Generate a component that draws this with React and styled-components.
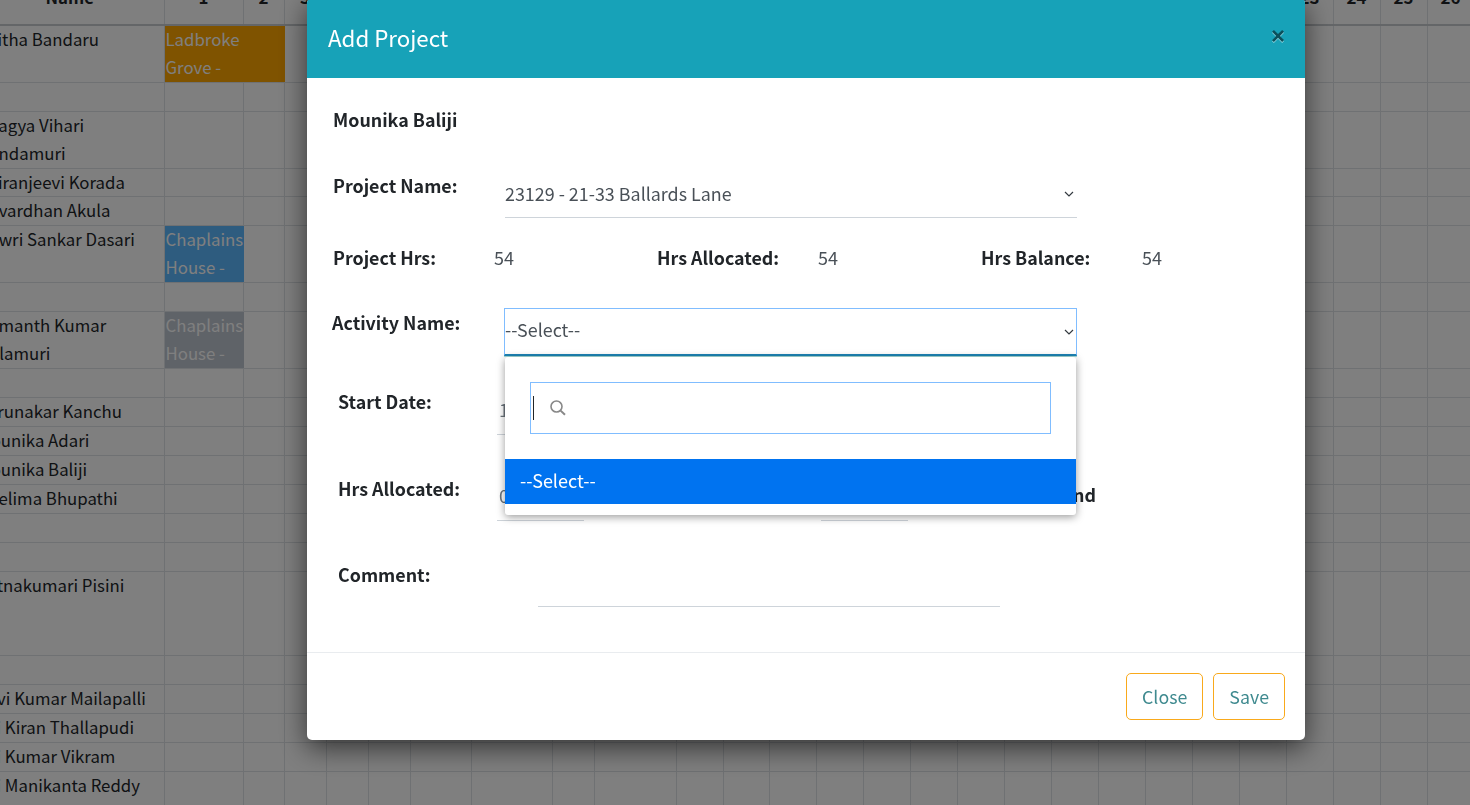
import React from "react";
import styled, { createGlobalStyle } from "styled-components";

const columns = [
    193, 79, 41, 42, 42, 42, 61, 81, 42, 82, 47, 46, 47, 47, 47, 47, 47, 47, 47,
    47, 47, 47, 47, 47, 47, 47, 47,
];
const days = columns.slice(1).map((_, i) => i + 1);

const rows = [
    { name: "Anitha Bandaru", h: 57, chip: { color: "#ffa600", span: 2, lines: ["Ladbroke", "Grove -"] } },
    { name: "", h: 29 },
    { name: "Bhagya Vihari Nandamuri", h: 57 },
    { name: "Chiranjeevi Korada", h: 28 },
    { name: "Govardhan Akula", h: 29 },
    { name: "Gowri Sankar Dasari", h: 57, chip: { color: "#5cb8ff", span: 1, lines: ["Chaplains", "House -"] } },
    { name: "", h: 29 },
    { name: "Hemanth Kumar Yellamuri", h: 57, chip: { color: "#bec6d0", span: 1, lines: ["Chaplains", "House -"] } },
    { name: "", h: 29 },
    { name: "Karunakar Kanchu", h: 29 },
    { name: "Mounika Adari", h: 29 },
    { name: "Mounika Baliji", h: 29 },
    { name: "Neelima Bhupathi", h: 29 },
    { name: "", h: 29 },
    { name: "", h: 29 },
    { name: "Ratnakumari Pisini", h: 84 },
    { name: "", h: 29 },
    { name: "Ravi Kumar Mailapalli", h: 29 },
    { name: "Sai Kiran Thallapudi", h: 29 },
    { name: "Sai Kumar Vikram", h: 29 },
    { name: "Sai Manikanta Reddy", h: 40 },
];

export default function App() {
    return (
        <>
            <GlobalStyle />
            <Page>
                <Roster>
                    <colgroup>
                        {columns.map((w, i) => (
                            <Col key={i} $w={w} />
                        ))}
                    </colgroup>
                    <thead>
                        <tr>
                            <HeadCell $pad={5}>Name</HeadCell>
                            {days.map((d) => (
                                <HeadCell key={d}>{d}</HeadCell>
                            ))}
                        </tr>
                    </thead>
                    <tbody>
                        {rows.map((row, i) => (
                            <Row key={i} $h={row.h}>
                                <NameCell>
                                    <CellText>{row.name}</CellText>
                                </NameCell>
                                {row.chip && (
                                    <ChipCell colSpan={row.chip.span} $color={row.chip.color}>
                                        <CellText>
                                            {row.chip.lines[0]}
                                            <br />
                                            {row.chip.lines[1]}
                                        </CellText>
                                    </ChipCell>
                                )}
                                {days.slice(row.chip ? row.chip.span : 0).map((d) => (
                                    <Cell key={d} />
                                ))}
                            </Row>
                        ))}
                    </tbody>
                </Roster>
            </Page>

            <Backdrop>
                <Modal>
                    <ModalHeader>
                        <ModalTitle>Add Project</ModalTitle>
                        <CloseX>×</CloseX>
                    </ModalHeader>

                    <ModalBody>
                        <Owner>Mounika Baliji</Owner>

                        <SelectRow $top={37}>
                            <SelectLabel>Project Name:</SelectLabel>
                            <PlainSelect>
                                <SelectText $lift={2}>23129 - 21-33 Ballards Lane</SelectText>
                                <Chevron />
                            </PlainSelect>
                        </SelectRow>

                        <HoursRow>
                            <HoursItem>
                                <Label>Project Hrs:</Label>
                                <Value>54</Value>
                            </HoursItem>
                            <HoursItem>
                                <Label>Hrs Allocated:</Label>
                                <Value>54</Value>
                            </HoursItem>
                            <HoursItem>
                                <Label>Hrs Balance:</Label>
                                <Value>54</Value>
                            </HoursItem>
                        </HoursRow>

                        <SelectRow $top={37}>
                            <ActivityLabel>Activity Name:</ActivityLabel>
                            <OpenSelectWrap>
                                <OpenSelect>
                                    <SelectText $lift={6}>--Select--</SelectText>
                                    <Chevron />
                                </OpenSelect>
                                <Dropdown>
                                    <SearchBox>
                                        <Caret />
                                        <SearchIcon />
                                    </SearchBox>
                                    <Option>
                                        <OptionText>--Select--</OptionText>
                                    </Option>
                                </Dropdown>
                            </OpenSelectWrap>
                        </SelectRow>

                        <InputRow $top={33}>
                            <InputLabel $up={2}>Start Date:</InputLabel>
                            <SmallInput>10/08/2023</SmallInput>
                            <InputLabel $left={78} $up={2}>End Date:</InputLabel>
                            <SmallInput>10/08/2023</SmallInput>
                        </InputRow>

                        <InputRow $top={40}>
                            <InputLabel>Hrs Allocated:</InputLabel>
                            <SmallInput>0</SmallInput>
                            <InputLabel $left={78}>Hrs Balance:</InputLabel>
                            <SmallInput>0</SmallInput>
                            <WeekendLabel>Incl Weekend</WeekendLabel>
                        </InputRow>

                        <InputRow $top={40}>
                            <CommentLabel>Comment:</CommentLabel>
                            <CommentInput />
                        </InputRow>
                    </ModalBody>

                    <ModalFooter>
                        <FooterButton>Close</FooterButton>
                        <FooterButton>Save</FooterButton>
                    </ModalFooter>
                </Modal>
            </Backdrop>
        </>
    );
}

function Chevron() {
    return (
        <ChevronSvg viewBox="0 0 10 6" fill="none">
            <path d="M1 1l4 4 4-4" stroke="#343a40" strokeWidth="1.2" />
        </ChevronSvg>
    );
}

function SearchIcon() {
    return (
        <SearchSvg viewBox="0 0 18 18" fill="none">
            <circle cx="7.5" cy="7.5" r="5.5" stroke="#888" strokeWidth="1.6" />
            <path d="M11.6 11.6l4.4 4.2" stroke="#888" strokeWidth="2" />
        </SearchSvg>
    );
}

const GlobalStyle = createGlobalStyle`
    html, body {
        margin: 0;
        height: 100%;
        overflow: hidden;
        background: #fff;
    }
    body {
        font-family: "Noto Sans CJK SC", "Noto Sans", sans-serif;
        font-size: 18px;
        line-height: 28px;
        color: #212529;
    }
`;

const Page = styled.div`
    height: 100vh;
    overflow: hidden;
`;

const Roster = styled.table`
    table-layout: fixed;
    width: ${columns.reduce((a, b) => a + b, 0)}px;
    margin: -17px 0 0 -29px;
    border-collapse: collapse;
    font-size: 16.8px;
`;

const Col = styled.col`
    width: ${(p) => p.$w}px;
`;

const HeadCell = styled.th`
    height: 41px;
    padding: 0 0 0 ${(p) => p.$pad ?? 0}px;
    vertical-align: top;
    text-align: center;
    font-weight: 700;
    border-right: 1px solid #dee2e6;
    border-bottom: 2px solid #c8ccd0;
`;

const Row = styled.tr`
    height: ${(p) => p.$h}px;
`;

const Cell = styled.td`
    padding: 0;
    border: 1px solid #dee2e6;
    border-left: 0;
    border-top: 0;
`;

const CellText = styled.div`
    margin-top: -1px;
`;

const NameCell = styled(Cell)`
    padding: 0 4px 0 6px;
    vertical-align: top;
`;

const ChipCell = styled(Cell)`
    padding: 0 0 0 1px;
    vertical-align: top;
    color: #fff;
    white-space: nowrap;
    background: ${(p) => p.$color};
    border-right-color: ${(p) => p.$color};
`;

const Backdrop = styled.div`
    position: fixed;
    inset: 0;
    padding-left: 307px;
    background: rgba(0, 0, 0, 0.5);
`;

const Modal = styled.div`
    width: 998px;
    margin-top: -2px;
    background: #fff;
    border-radius: 5px;
    box-shadow: 0 8px 28px rgba(0, 0, 0, 0.6);
`;

const ModalHeader = styled.div`
    display: flex;
    align-items: center;
    justify-content: space-between;
    height: 80px;
    padding: 0 20px 0 21px;
    background: #17a2b8;
    border-radius: 5px 5px 0 0;
`;

const ModalTitle = styled.div`
    font-size: 22.3px;
    color: #fff;
    margin-bottom: 2px;
`;

const CloseX = styled.div`
    font-family: "Liberation Sans", sans-serif;
    font-size: 24px;
    font-weight: 700;
    line-height: 1;
    margin-bottom: 4px;
    color: #000;
    opacity: 0.5;
    text-shadow: 0 1px 0 #fff;
`;

const ModalBody = styled.div`
    height: 574px;
    box-sizing: border-box;
    padding: 27px 26px 0;
`;

const Owner = styled.div`
    font-size: 17.85px;
    font-weight: 700;
`;

const Label = styled.div`
    font-size: 17.85px;
    font-weight: 700;
    width: 161px;
    flex: none;
`;

const Value = styled.div`
    color: #495057;
`;

const SelectRow = styled.div`
    display: flex;
    align-items: flex-start;
    margin-top: ${(p) => p.$top}px;
`;

const SelectLabel = styled(Label)`
    width: 172px;
    margin-top: 1px;
`;

const ActivityLabel = styled(Label)`
    width: 172px;
    margin-left: -1px;
`;

const PlainSelect = styled.div`
    display: flex;
    align-items: center;
    justify-content: space-between;
    box-sizing: border-box;
    width: 572px;
    height: 48px;
    padding-right: 3px;
    color: #495057;
    border-bottom: 1px solid #ced4da;
`;

const SelectText = styled.span`
    font-size: 17.9px;
    padding-bottom: ${(p) => p.$lift}px;
`;

const OpenSelectWrap = styled.div`
    position: relative;
    width: 573px;
`;

const OpenSelect = styled(PlainSelect)`
    width: 573px;
    padding-right: 2px;
    border: 1px solid #80bdff;
    border-bottom: 2px solid #1d84b5;
    box-shadow: 0 1px 0 #a8dcd8;
`;

const ChevronSvg = styled.svg`
    width: 10px;
    height: 6px;
`;

const Dropdown = styled.div`
    position: absolute;
    top: 49px;
    left: 1px;
    right: 1px;
    box-sizing: border-box;
    height: 158px;
    padding-top: 25px;
    background: #fff;
    border-radius: 3px;
    box-shadow: 0 2px 8px rgba(0, 0, 0, 0.4);
`;

const SearchBox = styled.div`
    display: flex;
    align-items: center;
    box-sizing: border-box;
    height: 52px;
    margin: 0 25px;
    padding-left: 2px;
    border: 1px solid #80bdff;
`;

const Caret = styled.span`
    width: 1px;
    height: 24px;
    background: #212529;
`;

const SearchSvg = styled.svg`
    width: 18px;
    height: 18px;
    margin-left: 15px;
`;

const Option = styled.div`
    display: flex;
    align-items: center;
    height: 45px;
    margin-top: 25px;
    padding-left: 15px;
    color: #fff;
    background: #0073f0;
`;

const OptionText = styled.span`
    padding-bottom: 4px;
`;

const HoursRow = styled.div`
    display: grid;
    grid-template-columns: repeat(3, 324px);
    margin-top: 25px;
`;

const HoursItem = styled.div`
    display: flex;
`;

const InputRow = styled.div`
    display: flex;
    align-items: flex-start;
    height: 46px;
    margin-top: ${(p) => p.$top}px;
    padding-left: 5px;
`;

const InputLabel = styled(Label)`
    width: 159px;
    margin: -${(p) => p.$up ?? 1}px 0 0 ${(p) => p.$left ?? 0}px;
`;

const SmallInput = styled.div`
    box-sizing: border-box;
    width: 87px;
    height: 46px;
    padding: 6px 0 0 2px;
    color: #6c757d;
    white-space: nowrap;
    border-bottom: 1px solid #ced4da;
`;

const WeekendLabel = styled(Label)`
    width: 115px;
    margin: 5px 0 0 71px;
    white-space: nowrap;
`;

const CommentLabel = styled(Label)`
    width: 200px;
    margin-top: -1px;
`;

const CommentInput = styled.div`
    box-sizing: border-box;
    width: 462px;
    height: 46px;
    border-bottom: 1px solid #ced4da;
`;

const ModalFooter = styled.div`
    display: flex;
    justify-content: flex-end;
    gap: 10px;
    box-sizing: border-box;
    height: 88px;
    padding: 20px 20px 0;
    border-top: 1px solid #e9ecef;
`;

const FooterButton = styled.button`
    height: 47px;
    padding: 0 15px 2px;
    font: inherit;
    font-size: 17.8px;
    color: #3f8a8f;
    background: #fff;
    border: 1px solid #f9a91b;
    border-radius: 5px;
`;
